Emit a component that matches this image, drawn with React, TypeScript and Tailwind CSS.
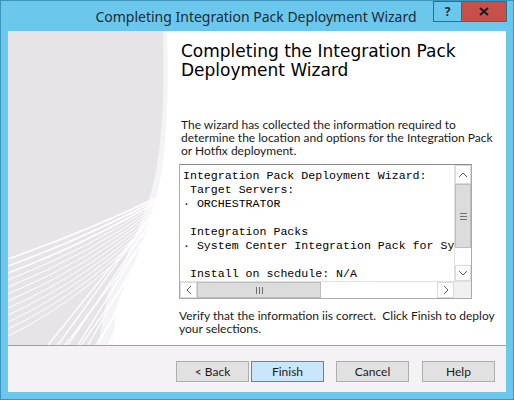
import React from "react";

const ui = { fontFamily: 'Lato, "Noto Sans", Arial, sans-serif' };
const title = { fontFamily: '"Noto Sans", "Open Sans", Arial, sans-serif' };
const mono = { fontFamily: '"Liberation Mono", "Courier New", monospace' };
const heading = { fontFamily: '"DejaVu Sans", Verdana, sans-serif' };

function Watermark() {
  const fan = Array.from({ length: 12 }, (_, i) => i);
  const latA = Array.from({ length: 12 }, (_, i) => i);
  const latB = Array.from({ length: 12 }, (_, i) => i);
  return (
    <svg width="164" height="314" viewBox="0 0 164 314" className="block">
      <rect x="0" y="0" width="164" height="314" fill="#e6e4e7" />
      <path d="M155 0 C157 70 154 130 140 172 C128 205 116 232 100 262 L90 314 L164 314 L164 0 Z" fill="#f4f3f5" />
      <path d="M159 0 C161 70 159 130 147 172 C136 210 124 240 110 270 L104 314 L164 314 L164 0 Z" fill="#ffffff" />
      {latA.map((i) => (
        <line key={"a" + i} x1={164} y1={160 + i * 13} x2={40 + i * 8} y2={314 + i * 12} stroke="#ffffff" strokeWidth="1.3" />
      ))}
      {latB.map((i) => (
        <line key={"b" + i} x1={50 + i * 10} y1={314} x2={150 + i * 1.5} y2={175 + i * 3} stroke="#ffffff" strokeWidth="1.3" />
      ))}
      {fan.map((i) => (
        <path key={"f" + i} d={`M152 ${165 + i * 2} Q 80 ${200 + i * 6} 0 ${228 + i * 7}`} fill="none" stroke="#ffffff" strokeWidth={i < 3 ? 1.5 : 1} />
      ))}
    </svg>
  );
}

function Chevron({ dir }: { dir: "up" | "down" | "left" | "right" }) {
  const pts = {
    up: "1,6 5,2 9,6",
    down: "1,2 5,6 9,2",
    left: "6,1 2,5 6,9",
    right: "2,1 6,5 2,9",
  }[dir];
  const vertical = dir === "up" || dir === "down";
  return (
    <svg width={vertical ? 10 : 8} height={vertical ? 8 : 10} className="block">
      <polyline points={pts} fill="none" stroke="#606060" strokeWidth="1" />
    </svg>
  );
}

const lines = [
  "Integration Pack Deployment Wizard:",
  " Target Servers:",
  "· ORCHESTRATOR",
  "",
  " Integration Packs",
  "· System Center Integration Pack for System Center 2012",
  "",
  " Install on schedule: N/A",
  "",
];

function Btn({ label, primary }: { label: string; primary?: boolean }) {
  return (
    <div
      className={
        "w-[73px] h-[21px] flex items-center justify-center text-[12px] text-[#1a1a1a] border " +
        (primary ? "bg-[#c9e6fa] border-[#3c8ed0]" : "bg-[#e1e1e1] border-[#adadad]")
      }
      style={ui}
    >
      {label}
    </div>
  );
}

export default function App() {
  return (
    <div className="w-[514px] h-[400px] bg-[#6bc8ec] border border-[#3d95bd] flex flex-col overflow-hidden">
      {/* title bar */}
      <div className="h-[30px] flex items-start">
        <div className="flex-1 h-[30px] flex items-center justify-center pl-[78px] pt-[1px]">
          <span className="text-[14px] text-[#1d2b33] whitespace-nowrap" style={title}>
            Completing Integration Pack Deployment Wizard
          </span>
        </div>
        <div className="flex h-[21px] mr-[6px]">
          <div className="w-[29px] h-[21px] border border-[#2f6f8e] bg-[#6bc8ec] flex items-center justify-center">
            <span className="text-[12px] font-bold text-[#1a2a3a]" style={title}>?</span>
          </div>
          <div className="w-[45px] h-[21px] bg-[#c7504b] border-y border-r border-[#2f6f8e] flex items-center justify-center">
            <svg width="10" height="9" viewBox="0 0 10 9">
              <path d="M1 1 L9 8 M9 1 L1 8" stroke="#1a1a1a" strokeWidth="2" />
            </svg>
          </div>
        </div>
      </div>

      {/* client */}
      <div className="mx-[7px] flex-1 flex flex-col">
        <div className="flex h-[314px]">
          <Watermark />
          <div className="flex-1 bg-white flex flex-col pl-[7px]">
            <div className="pl-[2px] pt-[11px] text-[17px] leading-[19px] text-black" style={heading}>
              Completing the Integration Pack
              <br />
              Deployment Wizard
            </div>
            <div className="pl-[2px] pt-[38px] text-[12px] leading-[13px] text-[#1a1a1a]" style={ui}>
              The wizard has collected the information required to
              <br />
              determine the location and options for the Integration Pack
              <br />
              or Hotfix deployment.
            </div>
            <div className="mt-[7px] w-[293px] h-[135px] border border-[#a9a9a9] border-t-[#8a8a8a] flex flex-col bg-white">
              <div className="flex h-[116px]">
                <div className="flex-1 overflow-hidden pl-[3px] pt-[4px] text-[11.6px] leading-[14px] text-black whitespace-pre" style={mono}>
                  {lines.map((l, i) => (
                    <div key={i} className="h-[14px]">{l}</div>
                  ))}
                </div>
                <div className="w-[17px] flex flex-col bg-[#f7f7f7] border-l border-[#e0e0e0]">
                  <div className="h-[19px] flex items-center justify-center bg-white border border-[#dadada]">
                    <Chevron dir="up" />
                  </div>
                  <div className="h-[64px] bg-[#dcdcdc] border border-[#bdbdbd] flex flex-col items-center justify-center gap-[2px]">
                    <div className="w-[7px] h-[1px] bg-[#707070]" />
                    <div className="w-[7px] h-[1px] bg-[#707070]" />
                    <div className="w-[7px] h-[1px] bg-[#707070]" />
                  </div>
                  <div className="flex-1 bg-white" />
                  <div className="h-[16px] flex items-center justify-center bg-white border border-[#dadada]">
                    <Chevron dir="down" />
                  </div>
                </div>
              </div>
              <div className="flex h-[17px] border-t border-[#e0e0e0]">
                <div className="w-[17px] flex items-center justify-center bg-white border border-[#dadada]">
                  <Chevron dir="left" />
                </div>
                <div className="w-[124px] bg-[#dcdcdc] border border-[#bdbdbd] flex items-center justify-center gap-[2px]">
                  <div className="w-[1px] h-[7px] bg-[#707070]" />
                  <div className="w-[1px] h-[7px] bg-[#707070]" />
                  <div className="w-[1px] h-[7px] bg-[#707070]" />
                </div>
                <div className="flex-1 bg-white" />
                <div className="w-[17px] flex items-center justify-center bg-white border border-[#dadada]">
                  <Chevron dir="right" />
                </div>
                <div className="w-[17px] bg-[#f0f0f0]" />
              </div>
            </div>
            <div className="pt-[10px] text-[12px] leading-[13px] text-[#1a1a1a]" style={ui}>
              Verify that the information iis correct.&nbsp; Click Finish to deploy
              <br />
              your selections.
            </div>
          </div>
        </div>
        <div className="h-[1px] bg-[#a0a0a0]" />
        <div className="h-[46px] bg-[#f4f2f5] flex items-start pt-[15px] pl-[168px]">
          <Btn label="< Back" />
          <div className="ml-[2px]">
            <Btn label="Finish" primary />
          </div>
          <div className="ml-[12px]">
            <Btn label="Cancel" />
          </div>
          <div className="ml-[13px]">
            <Btn label="Help" />
          </div>
        </div>
      </div>
      <div className="h-[7px]" />
    </div>
  );
}
